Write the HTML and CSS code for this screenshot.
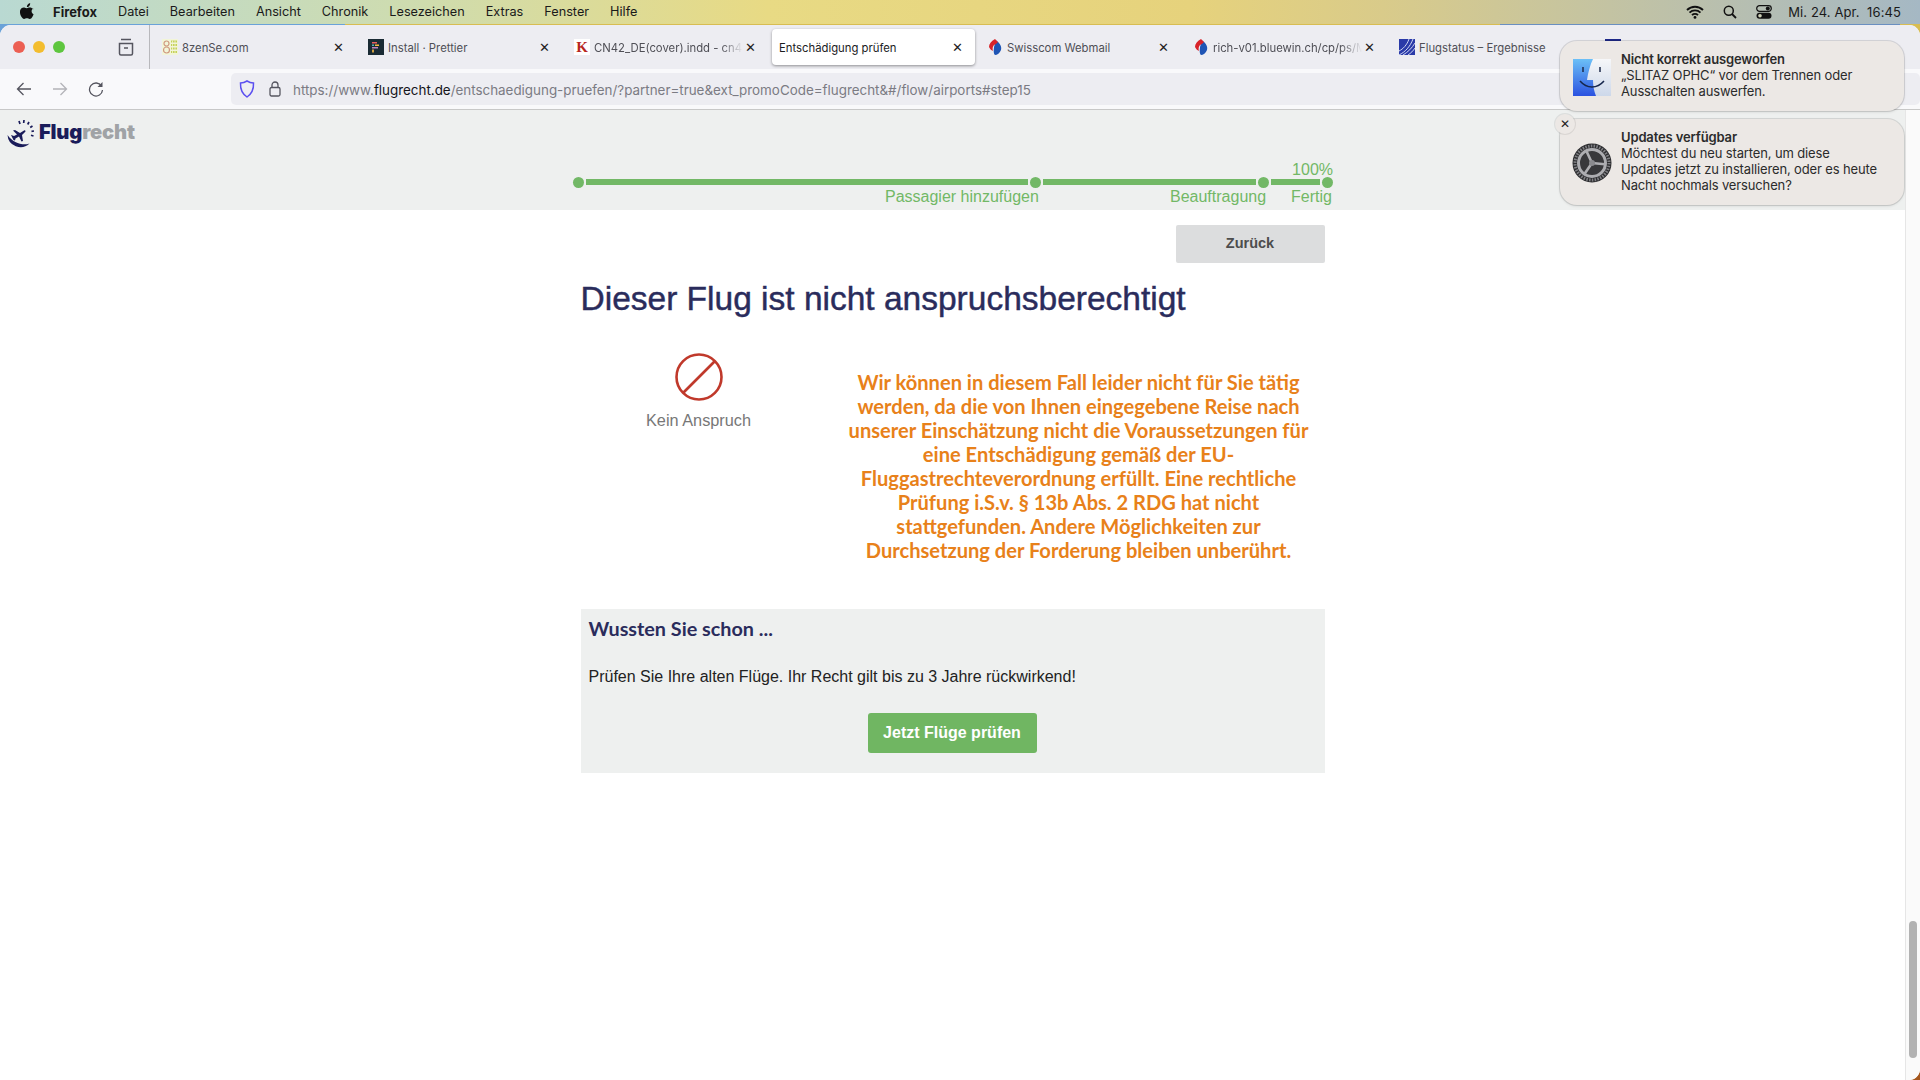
FILE: index.html
```html
<!DOCTYPE html>
<html lang="de">
<head>
<meta charset="utf-8">
<title>Entschädigung prüfen</title>
<link rel="stylesheet" href="styles.css">
</head>
<body>
<header class="menubar">
  <div class="menu-left">
    <svg class="apple" viewBox="0 0 14 16" width="14" height="16"><path d="M10.2 0.3c.1 1-.3 1.9-.9 2.6-.6.7-1.5 1.2-2.4 1.1-.1-.9.3-1.9.9-2.5C8.400.8 9.400.3 10.200.300zM13.200 5.500c-1 .6-1.600 1.600-1.600 2.800 0 1.300.8 2.500 2 3-.3.9-.7 1.800-1.300 2.600-.7 1-1.500 2-2.600 2-1.100 0-1.500-.7-2.800-.7-1.300 0-1.700.7-2.800.7-1.100 0-1.900-1-2.700-2.100C.4 12.300-.2 10.300 0 8.400c.1-1.300.7-2.500 1.800-3.300.9-.6 2.100-.8 3.100-.4.6.2 1.200.5 1.800.5.6 0 1.300-.4 2-.6 1.700-.4 3.400.1 4.500 1.900z" fill="#111"/></svg>
    <span class="menu-app">Firefox</span>
    <span>Datei</span><span>Bearbeiten</span><span>Ansicht</span><span>Chronik</span><span>Lesezeichen</span><span>Extras</span><span>Fenster</span><span>Hilfe</span>
  </div>
  <div class="menu-right">
    <svg width="18" height="14" viewBox="0 0 18 14"><path d="M1 5a11.500 11.500 0 0 1 16 0M3.500 7.600a8 8 0 0 1 11 0M6 10.100a4.300 4.300 0 0 1 6 0" fill="none" stroke="#111" stroke-width="1.900"/><circle cx="9" cy="12.400" r="1.400" fill="#111"/></svg>
    <svg width="14" height="14" viewBox="0 0 14 14"><circle cx="5.800" cy="5.800" r="4.500" fill="none" stroke="#111" stroke-width="1.500"/><path d="M9 9l4 4" stroke="#111" stroke-width="1.800"/></svg>
    <svg width="16" height="14" viewBox="0 0 16 14"><rect x=".7" y=".7" width="14.600" height="5.600" rx="2.800" fill="none" stroke="#111" stroke-width="1.200"/><circle cx="11.800" cy="3.500" r="2" fill="#111"/><rect x=".5" y="7.700" width="15" height="6" rx="3" fill="#111"/><circle cx="4" cy="10.700" r="1.800" fill="#cfd3b8"/></svg>
    <span class="clock">Mi. 24. Apr.&nbsp; 16:45</span>
  </div>
</header>
<div class="wall-line"></div>

<div class="window">
  <div class="tabbar">
    <div class="traffic"><i class="light red"></i><i class="light yellow"></i><i class="light green"></i></div>
    <svg class="tabs-icon" width="16" height="18" viewBox="0 0 16 18"><path d="M3 1.500h10M1.500 5.500h13v10a1.500 1.500 0 0 1-1.500 1.500H3a1.500 1.500 0 0 1-1.500-1.500zM6 10h4" fill="none" stroke="#55555f" stroke-width="1.500"/></svg>
    <div class="tabs">
      <div class="tab">
        <svg class="fav" viewBox="0 0 16 16"><rect width="16" height="16" fill="#f2f5d8"/><circle cx="4.500" cy="4.500" r="2.500" fill="none" stroke="#d09a80" stroke-width="1.200"/><circle cx="4.500" cy="11" r="3" fill="none" stroke="#d09a80" stroke-width="1.200"/><path d="M9 1.500h6v2H9zM9 5h6v2H9zM9 8.500h6v2H9zM9 12h6v2H9z" fill="#c6d25a"/><path d="M10.500 1.500v13M13 1.500v13" stroke="#f2f5d8" stroke-width=".8"/></svg>
        <span class="tab-label">8zenSe.com</span><span class="tab-x">✕</span>
      </div>
      <div class="tab">
        <svg class="fav" viewBox="0 0 16 16"><rect width="16" height="16" fill="#1a2b34"/><path d="M4 3h5v1.500H4z" fill="#ea5e5e"/><path d="M4 5.500h2v1.500H4z" fill="#56b3b4"/><path d="M7 5.500h4v1.500H7z" fill="#f7ba3e"/><path d="M4 8h6v1.500H4z" fill="#bf85bf"/><path d="M4 10.500h2v3H4z" fill="#d0a040"/></svg>
        <span class="tab-label">Install · Prettier</span><span class="tab-x">✕</span>
      </div>
      <div class="tab">
        <span class="fav fav-k">K</span>
        <span class="tab-label fade">CN42_DE(cover).indd - cn4</span><span class="tab-x">✕</span>
      </div>
      <div class="tab tab-active">
        <div class="tab-pill"><span class="tab-label">Entschädigung prüfen</span><span class="tab-x">✕</span></div>
      </div>
      <div class="tab">
        <svg class="fav" viewBox="0 0 16 16"><path d="M9 1.500C13 4 15 8 14 11c-1 3-4 5-6 5-2-2-1-6-1-8z" fill="#1f55b5"/><path d="M8 0C4 2 2 5 2 8c1 2 2 3 4 4-1-3 0-6 3-7l2-2z" fill="#d8232a"/></svg>
        <span class="tab-label">Swisscom Webmail</span><span class="tab-x">✕</span>
      </div>
      <div class="tab">
        <svg class="fav" viewBox="0 0 16 16"><path d="M9 1.500C13 4 15 8 14 11c-1 3-4 5-6 5-2-2-1-6-1-8z" fill="#1f55b5"/><path d="M8 0C4 2 2 5 2 8c1 2 2 3 4 4-1-3 0-6 3-7l2-2z" fill="#d8232a"/></svg>
        <span class="tab-label fade">rich-v01.bluewin.ch/cp/ps/M</span><span class="tab-x">✕</span>
      </div>
      <div class="tab">
        <svg class="fav" viewBox="0 0 16 16"><rect width="16" height="16" fill="#2a3aa8"/><path d="M0 12C4 10 8 6 10 0M0 16C6 13 11 8 14 0M4 16C9 13 13 9 16 4M9 16c3-2 5-4 7-7" fill="none" stroke="#cfd6f2" stroke-width="1"/></svg>
        <span class="tab-label">Flugstatus – Ergebnisse</span>
      </div>
      <div class="tab">
        <svg class="fav" viewBox="0 0 16 16"><rect width="16" height="16" fill="#1f2a8a"/></svg>
      </div>
    </div>
  </div>

  <div class="navbar">
    <svg class="nav-icon" width="16" height="14" viewBox="0 0 16 14"><path d="M15 7H1.500M7.500 1L1.500 7l6 6" fill="none" stroke="#55555f" stroke-width="1.300"/></svg>
    <svg class="nav-icon" width="16" height="14" viewBox="0 0 16 14"><path d="M1 7h13.500M8.500 1l6 6-6 6" fill="none" stroke="#b3b3b8" stroke-width="1.300"/></svg>
    <svg class="nav-icon" width="16" height="16" viewBox="0 0 16 16"><path d="M13.500 5A6.500 6.500 0 1 0 14.500 9" fill="none" stroke="#55555f" stroke-width="1.300"/><path d="M14.500 1v5h-5z" fill="#55555f"/></svg>
    <div class="urlbar">
      <svg width="16" height="18" viewBox="0 0 16 18"><path d="M8 1c2 1.300 4.300 2 6.500 2 .3 6-2 11-6.500 14C3.500 14 1.200 9 1.500 3 3.700 3 6 2.300 8 1z" fill="none" stroke="#5b4ff0" stroke-width="1.500"/></svg>
      <svg width="12" height="16" viewBox="0 0 12 16"><rect x="1" y="6.500" width="10" height="8.500" rx="1.500" fill="none" stroke="#55555f" stroke-width="1.300"/><path d="M3 6.500V4a3 3 0 0 1 6 0v2.500" fill="none" stroke="#55555f" stroke-width="1.300"/></svg>
      <span class="url">https://www.<b>flugrecht.de</b>/entschaedigung-pruefen/?partner=true&amp;ext_promoCode=flugrecht&amp;#/flow/airports#step15</span>
    </div>
  </div>

  <div class="viewport">
    <main class="page">
      <div class="site-head">
        <div class="logo">
          <svg width="30" height="30" viewBox="0 0 30 30">
            <path d="M1.500 17a13 13 0 0 0 22 8.500C17 28 7 25 1.500 17z" fill="#1a1c5a"/>
            <path d="M5 17l3 1 3-1.500-4-4 2-.5 5 3 4-2.500c1-.5 2 .5 1.300 1.300L16 17l1 6-1.500.5-2.500-5-3.500 2-.5 2-1.500-.5z" fill="#1a1c5a"/>
            <path d="M13 3l1 3M18 2l-.3 3M23 4l-1.300 2.500M26.500 8l-2.300 1.500M28 13l-2.500.3M27.500 18l-2.500-.7" stroke="#1a1c5a" stroke-width="1.700" fill="none"/>
          </svg>
          <span class="logo-text"><span class="logo-a">Flug</span><span class="logo-b">recht</span></span>
        </div>
        <div class="progress">
          <div class="pct">100%</div>
          <div class="track">
            <i class="dot"></i><i class="seg seg1"></i><i class="dot"></i><i class="seg seg2"></i><i class="dot"></i><i class="seg seg3"></i><i class="dot"></i>
          </div>
          <div class="steps"><span class="step1">Passagier hinzufügen</span><span class="step2">Beauftragung</span><span class="step3">Fertig</span></div>
        </div>
      </div>

      <div class="content">
        <div class="back-row"><a class="btn-back">Zurück</a></div>
        <h1 class="title">Dieser Flug ist nicht anspruchsberechtigt</h1>
        <div class="result">
          <div class="verdict">
            <svg width="48" height="48" viewBox="0 0 48 48"><circle cx="24" cy="24" r="22.500" fill="none" stroke="#c0392b" stroke-width="2.600"/><path d="M8 40L40 8" stroke="#c0392b" stroke-width="2.600"/></svg>
            <span class="verdict-label">Kein Anspruch</span>
          </div>
          <p class="notice">Wir können in diesem Fall leider nicht für Sie tätig<br>werden, da die von Ihnen eingegebene Reise nach<br>unserer Einschätzung nicht die Voraussetzungen für<br>eine Entschädigung gemäß der EU-<br>Fluggastrechteverordnung erfüllt. Eine rechtliche<br>Prüfung i.S.v. § 13b Abs. 2 RDG hat nicht<br>stattgefunden. Andere Möglichkeiten zur<br>Durchsetzung der Forderung bleiben unberührt.</p>
        </div>
        <section class="tip">
          <h2 class="tip-title">Wussten Sie schon ...</h2>
          <p class="tip-text">Prüfen Sie Ihre alten Flüge. Ihr Recht gilt bis zu 3 Jahre rückwirkend!</p>
          <div class="tip-action"><a class="btn-go">Jetzt Flüge prüfen</a></div>
        </section>
      </div>
    </main>
    <aside class="scrollbar"><i class="thumb"></i></aside>
  </div>
</div>

<div class="notes">
  <div class="note">
    <svg class="note-icon" width="38" height="37" viewBox="0 0 38 37">
      <defs>
        <linearGradient id="fl" x1="0" y1="0" x2="0" y2="1"><stop offset="0" stop-color="#6cc0f7"/><stop offset="1" stop-color="#2b52e0"/></linearGradient>
        <linearGradient id="fr" x1="0" y1="0" x2="0" y2="1"><stop offset="0" stop-color="#f6f7f9"/><stop offset="1" stop-color="#cdd8ea"/></linearGradient>
      </defs>
      <rect width="38" height="37" fill="url(#fl)"/>
      <path d="M20 0C17 6 15 14 14 21h6c0 6 1 11 3 16h15V0z" fill="url(#fr)"/>
      <path d="M10 8v5M27 8v5" stroke="#1c2a4a" stroke-width="1.500"/>
      <path d="M7 22c7 8 17 8 24 0" fill="none" stroke="#16264c" stroke-width="1.500"/>
    </svg>
    <div class="note-body"><b>Nicht korrekt ausgeworfen</b><br>„SLITAZ OPHC“ vor dem Trennen oder<br>Ausschalten auswerfen.</div>
  </div>
  <div class="note note-2">
    <span class="note-close">✕</span>
    <svg class="note-icon gear" width="40" height="40" viewBox="0 0 40 40">
      <circle cx="20" cy="20" r="19.500" fill="#2d2d30"/>
      <circle cx="20" cy="20" r="17" fill="none" stroke="#808084" stroke-width="3" stroke-dasharray="1.500 1.300"/>
      <circle cx="20" cy="20" r="13.500" fill="#38383b" stroke="#adadb1" stroke-width="3"/>
      <g transform="rotate(-25 20 20)"><path d="M20 20V7M20 20L9 26.500M20 20l11 6.500" stroke="#adadb1" stroke-width="2.600"/></g>
      <circle cx="20" cy="20" r="3" fill="#8a8a8e"/>
    </svg>
    <div class="note-body"><b>Updates verfügbar</b><br>Möchtest du neu starten, um diese<br>Updates jetzt zu installieren, oder es heute<br>Nacht nochmals versuchen?</div>
  </div>
</div>
</body>
</html>
```
FILE: styles.css
```css
* { box-sizing: border-box; }
html, body { margin: 0; height: 100%; overflow: hidden; }
body {
  width: 1920px; height: 1080px; position: relative;
  display: flex; flex-direction: column;
  font-family: "Liberation Sans", Arial, sans-serif;
  background:
    linear-gradient(90deg, #b9d9d2 0%, #cfdcae 22%, #e8da84 40%, #e6d27c 62%, #d9cb8a 72%, #a5b8c4 100%) top / 100% 25px no-repeat,
    linear-gradient(90deg, #6aa2d8 0 50%, #d8bd52 50%) 0 25px / 100% 40px no-repeat,
    #a5561c;
}
.menubar {
  height: 24px; display: flex; justify-content: space-between; align-items: center;
  font: 12.700px/24px Inter, "Noto Sans", sans-serif; color: #1a1a1a; padding: 0 19px 0 20px;
}
.menu-left { display: flex; align-items: center; gap: 21px; }
.menu-app { font-weight: 700; margin-left: -1px; font-size: 13px; }
.apple { margin-right: -1px; margin-top: -2px; }
.menu-right { display: flex; align-items: center; gap: 19px; }
.clock { margin-left: -3px; font-size: 13px; letter-spacing: .1px; }
.wall-line { height: 1px; background: linear-gradient(90deg, #6aa2d8 0 345px, #d8bd52 345px 1500px, #6a8fc0 1500px 1900px, #d8bd52 1900px); }

.window {
  flex: 1; display: flex; flex-direction: column; min-height: 0;
  border-radius: 11px 11px 11px 0; overflow: hidden; background: #fff;
}
.tabbar { height: 44px; background: #ededf2; display: flex; align-items: center; }
.traffic { display: flex; gap: 8px; width: 118px; padding-left: 13px; }
.light { width: 12px; height: 12px; border-radius: 50%; display: block; }
.red { background: #ec5f53; } .yellow { background: #f3bd2f; } .green { background: #5ec63f; }
.tabs-icon { margin-right: 15px; }
.tabs { display: flex; height: 44px; border-left: 1px solid #b8b8bc; flex: 1; overflow: hidden; }
.tab {
  flex: 0 0 206px; height: 44px; display: flex; align-items: center; padding-left: 12px;
  font: 11.300px Inter, "Noto Sans", sans-serif; color: #4f4f56; position: relative;
}
.fav { width: 16px; height: 16px; flex: none; margin-right: 4px; }
.fav-k { background: #fff; color: #b8261d; font: 700 15px/16px "Liberation Serif", serif; text-align: center; }
.tab-label { width: 149px; white-space: nowrap; flex: none; padding-top: 2px; }
.fade { -webkit-mask-image: linear-gradient(90deg, #000 85%, transparent); mask-image: linear-gradient(90deg, #000 85%, transparent); }
.tab-x { font-size: 13px; color: #222; width: 14px; text-align: center; line-height: 1; }
.tab-active { padding-left: 4px; }
.tab-pill {
  width: 203px; height: 36px; background: #fff; border-radius: 4px;
  box-shadow: 0 1px 3px rgba(0,0,0,.4); display: flex; align-items: center; padding-left: 7px; color: #1c1c1e;
}
.tab-pill .tab-label { width: 171px; }

.navbar {
  height: 41px; background: #f9f9fb; border-bottom: 1px solid #c8c8c8;
  display: flex; align-items: center; padding-left: 16px; flex: none;
}
.nav-icon { margin-right: 20px; }
.urlbar {
  flex: 1; height: 32px; background: #ededf2; border-radius: 5px;
  margin-left: 107px; display: flex; align-items: center; padding-left: 8px; gap: 14px;
}
.url { font: 13.400px Inter, "Noto Sans", sans-serif; color: #7b7b83; margin-left: -2px; padding-top: 1px; white-space: nowrap; }
.url b { font-weight: 400; color: #15141a; }

.viewport { flex: 1; display: flex; min-height: 0; }
.page { flex: 1; min-width: 0; background: #fff; }
.scrollbar { flex: 0 0 15px; background: #fafafa; border-left: 1px solid #e6e6e6; display: flex; flex-direction: column; justify-content: flex-end; padding: 0 3px 22px 3px; }
.thumb { display: block; width: 8px; height: 137px; border-radius: 4px; background: #b2b2b2; }

.site-head { height: 100px; background: #eef0ef; position: relative; display: flex; flex-direction: column; }
.logo { display: flex; align-items: flex-start; padding: 8px 0 0 6px; height: 50px; gap: 3px; }
.logo-text { font: 900 20.200px/24px Inter, Lato, sans-serif; letter-spacing: -.2px; margin-top: 2px; }
.logo-a { color: #1a1c5a; } .logo-b { color: #a0a3a6; }
.progress { width: 760px; margin: 1px 0 0 573px; color: #72b866; font-size: 16px; line-height: 18px; }
.pct { text-align: right; height: 15px; }
.track { display: flex; align-items: center; height: 12px; gap: 2px; }
.dot { width: 11px; height: 11px; border-radius: 50%; background: #72b866; flex: none; }
.seg { height: 6px; background: #72b866; display: block; flex: none; }
.seg1 { width: 442px; } .seg2 { width: 213px; } .seg3 { width: 49px; }
.steps { display: flex; }
.step1 { margin-left: 312px; width: 153px; white-space: nowrap; }
.step2 { margin-left: 132px; width: 96px; white-space: nowrap; }
.step3 { margin-left: 25px; white-space: nowrap; }

.content { width: 744px; margin: 0 auto; padding-top: 15px; }
.back-row { display: flex; justify-content: flex-end; }
.btn-back { width: 149px; height: 38px; background: #dcddde; border-radius: 2px; font-weight: 700; font-size: 14.500px; line-height: 37px; text-align: center; color: #4d4d4d; }
.title { margin: 16px 0 0; font-size: 33.500px; line-height: 40px; font-weight: 400; color: #2a2c5c; -webkit-text-stroke: .45px #2a2c5c; white-space: nowrap; }
.result { display: grid; grid-template-columns: 236px 480px; column-gap: 22px; margin-top: 34px; }
.verdict { display: flex; flex-direction: column; align-items: center; }
.verdict-label { color: #777; font-size: 16.300px; line-height: 18px; margin-top: 10px; }
.notice { margin: 17px 0 0; text-align: center; color: #e8811a; font: 700 20.100px/24px Lato, "Open Sans", sans-serif; white-space: nowrap; }
.tip { margin-top: 47px; height: 164px; background: #eef0ef; padding: 7px 8px 0; }
.tip-title { margin: 0; font: 700 19.800px/24px Lato, "Open Sans", sans-serif; color: #2a2c5c; }
.tip-text { margin: 26px 0 0; font-size: 16px; line-height: 22px; color: #222; }
.tip-action { display: flex; justify-content: flex-start; margin: 25px 0 0 279px; }
.btn-go { width: 169px; height: 40px; border-radius: 3px; background: #70b662; color: #fff; font-weight: 700; font-size: 16px; line-height: 39px; text-align: center; }

.notes { position: absolute; left: 1560px; top: 41px; width: 344px; display: flex; flex-direction: column; gap: 8px; font: 13px/16px Inter, "Noto Sans", sans-serif; color: #2b2b2b; }
.note { position: relative; background: #ece8e5; border-radius: 17px; box-shadow: 0 0 0 1px rgba(0,0,0,.1), 0 1px 3px rgba(0,0,0,.12); display: flex; align-items: center; height: 70px; padding-left: 13px; }
.note-2 { height: 86px; }
.note-icon { flex: none; margin-right: 10px; margin-top: 2px; }
.gear { margin-left: -1px; margin-right: 9px; }
.note-body { white-space: nowrap; letter-spacing: -.14px; padding-bottom: 2px; }
.note-body b { font-weight: 600; }
.note-close { position: absolute; left: -5px; top: -5px; width: 20px; height: 20px; border-radius: 50%; background: #ece8e5; box-shadow: 0 0 0 1px rgba(0,0,0,.08); font-size: 12px; line-height: 20px; text-align: center; color: #222; }
```
